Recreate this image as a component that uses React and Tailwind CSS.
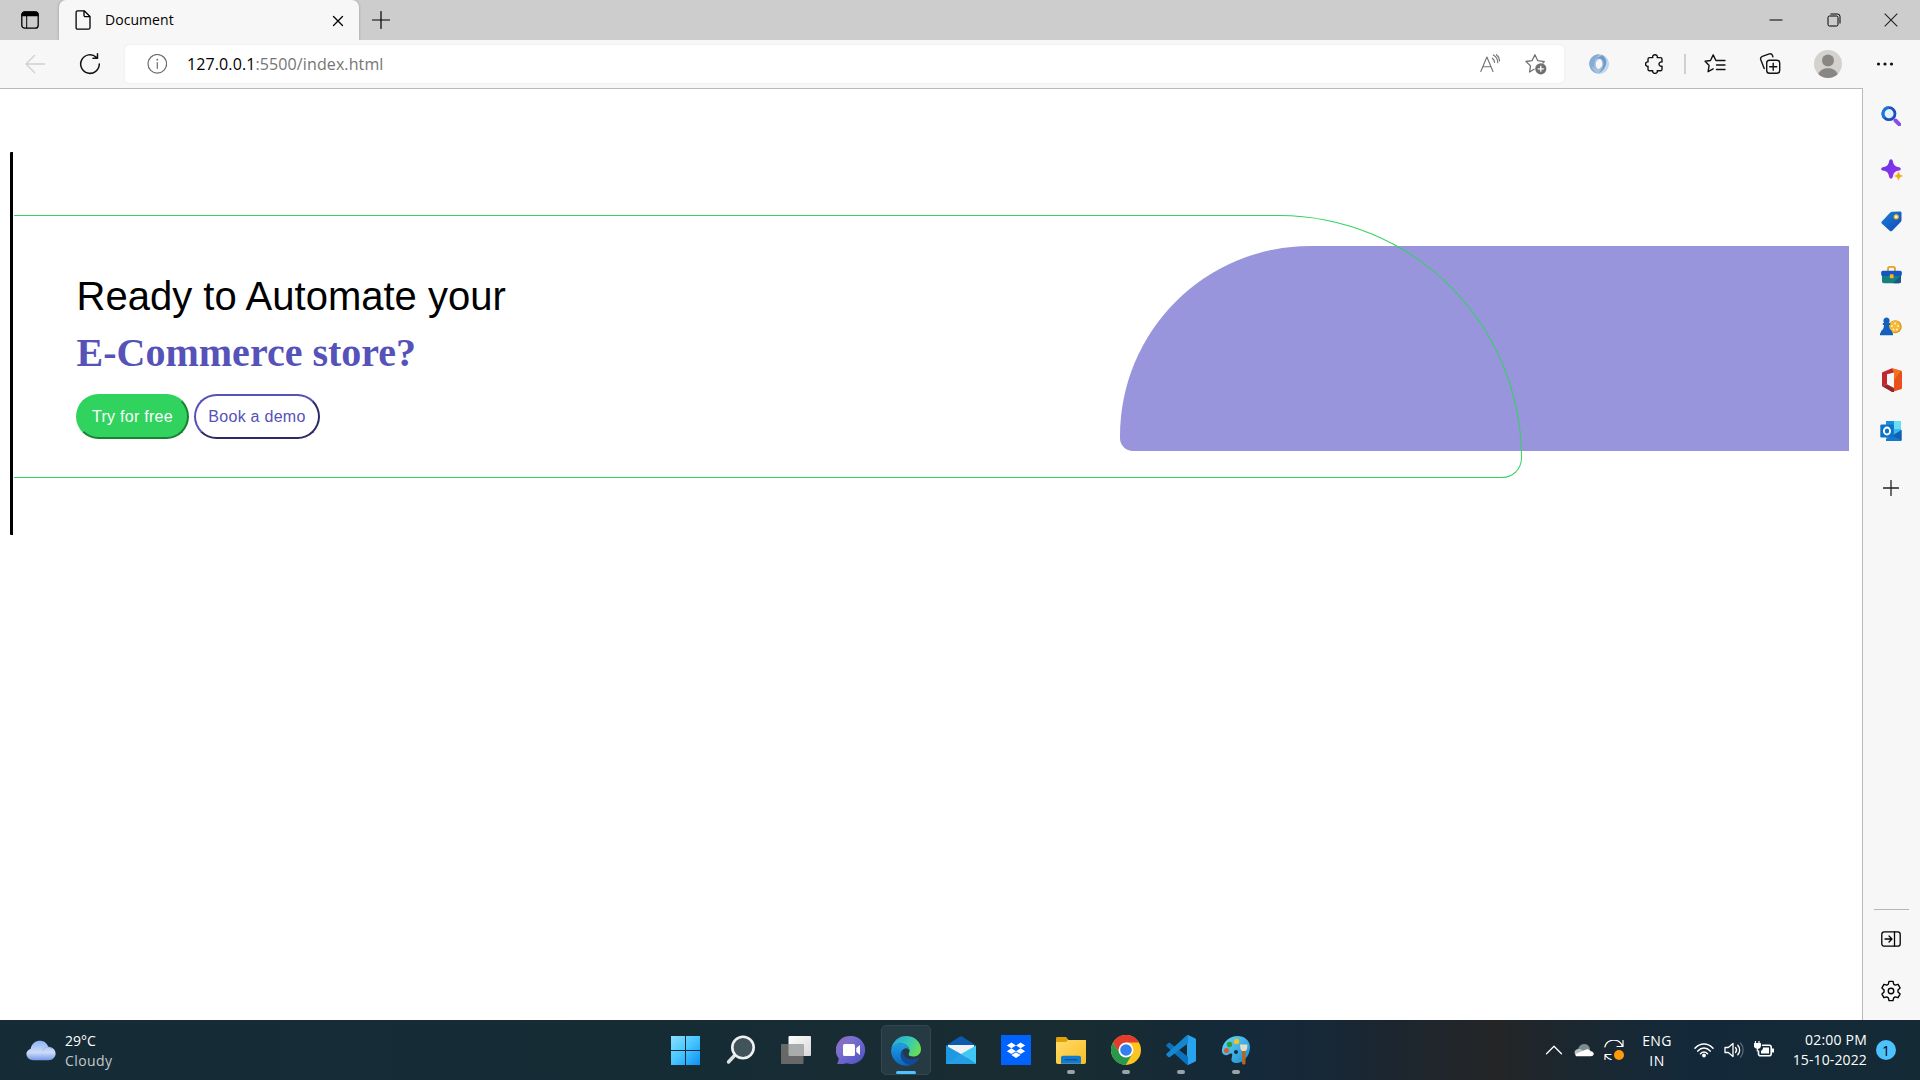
import React from "react";

const UI = "font-['Open_Sans','Noto_Sans',sans-serif]";

function Svg({ size = 20, box, className = "", children, ...rest }) {
  const b = box || size;
  return (
    <svg width={size} height={size} viewBox={`0 0 ${b} ${b}`} fill="none" className={`block shrink-0 ${className}`} {...rest}>
      {children}
    </svg>
  );
}

const line = { stroke: "currentColor", strokeWidth: 1.3, strokeLinecap: "round", strokeLinejoin: "round" };

function TitleBar() {
  return (
    <header className="flex h-10 bg-[#cdcdcd]">
      <div className="flex w-[59px] items-center justify-center rounded-br-[6px] pb-px pl-px text-black">
        <Svg size={20}>
          <rect x="1.8" y="2" width="16.4" height="16.2" rx="3" {...line} />
          <path d="M1.5 6.2V4.5a3 3 0 0 1 3-3h11a3 3 0 0 1 3 3v1.7z" fill="currentColor" />
          <path d="M6.7 6v12" {...line} strokeWidth="1" />
        </Svg>
      </div>
      <div className="flex w-[300px] items-center rounded-t-[7px] bg-[#f7f7f7] pl-[14px] text-black shadow-[0_0_3px_rgba(0,0,0,0.25)]">
        <Svg size={20}>
          <path d="M4.600.8h6.600L17 6.500v11.200c0 .9-.6 1.500-1.500 1.500H4.600c-.9 0-1.500-.6-1.500-1.500V2.300C3.100 1.400 3.700.8 4.600.8M11 1v4.200c0 .9.6 1.500 1.500 1.500H17" {...line} />
        </Svg>
        <span className="ml-3 mt-[-1px] w-[227px] text-[14px] leading-5 tracking-[0.05px]">Document</span>
        <Svg size={12} className="mt-px">
          <path d="M1.500 1.500l9 9M10.500 1.500l-9 9" {...line} />
        </Svg>
      </div>
      <div className="flex w-[44px] items-center justify-center pb-px text-black">
        <Svg size={18}>
          <path d="M9 .5v17M.5 9h17" {...line} strokeWidth="1.200" />
        </Svg>
      </div>
      <div className="ml-auto flex w-[173px] pb-px text-black">
        <div className="flex w-[58px] items-center justify-center">
          <Svg size={14}><path d="M.5 7h13" stroke="currentColor" /></Svg>
        </div>
        <div className="flex w-[57px] items-center justify-center">
          <Svg size={14}>
            <rect x="1" y="3" width="10" height="10" rx="1.500" stroke="currentColor" />
            <path d="M3.500 1h7A2.500 2.500 0 0 1 13 3.500v7" stroke="currentColor" />
          </Svg>
        </div>
        <div className="flex w-[58px] items-center justify-center">
          <Svg size={14}><path d="M.7.7l12.600 12.600M13.300.7L.7 13.300" stroke="#222" strokeWidth="1.100" /></Svg>
        </div>
      </div>
    </header>
  );
}

function ToolBar() {
  return (
    <div className="flex h-12 items-center bg-[#f7f7f7] text-[#111]">
      <div className="flex w-[69px] justify-center text-[#cfcfcf]">
        <Svg size={20} className="-mt-px"><path d="M9.500 1.500L1 10l8.500 8.500M1 10h18.500" {...line} /></Svg>
      </div>
      <div className="flex w-[42px] justify-center">
        <Svg size={22}>
          <path d="M20.300 11a9.300 9.300 0 1 1-3-6.800M18.500.8v4.500h-4.500" {...line} strokeWidth="1.500" />
        </Svg>
      </div>
      <div className="ml-[14px] flex h-[38px] w-[1439px] items-center rounded-[5px] bg-white shadow-[0_0_3px_rgba(0,0,0,0.06)]">
        <Svg size={20} className="ml-[22px] text-[#6b6b6b]">
          <circle cx="10.300" cy="9.800" r="9.300" {...line} strokeWidth="1.200" />
          <path d="M10.300 8.600v5.700" {...line} strokeWidth="1.200" />
          <circle cx="10.300" cy="5.700" r=".9" fill="currentColor" />
        </Svg>
        <span className="ml-[20px] mt-[-1px] text-[16px] leading-5 tracking-[0.11px] text-[#757575]">
          <span className="text-black">127.0.0.1</span>:5500/index.html
        </span>
        <div className="ml-auto flex items-center text-[#707070]">
          <div className="flex w-[46px] justify-center">
            <Svg size={20}>
              <path d="M.8 17.500L6.900 3l6.100 14.500M2.900 12.800h8.100M12.300 4.200c1.400 1 2.200 2.500 2.200 4.300M13.300.9c2.800 1.600 4.500 4.400 4.500 7.800M16.500.7c1.900 1.500 3 3.800 3 6.300" {...line} strokeWidth="1.100" />
            </Svg>
          </div>
          <div className="mr-[5px] flex w-[46px] justify-center">
            <Svg size={22}>
              <path d="M9 16.300L4.600 19l.9-6.100L1 8.500l6-.8L9.900 1.800l2.900 5.900 6.500.9-1.300 1.400" {...line} />
              <circle cx="15.800" cy="15.800" r="5.600" fill="currentColor" />
              <path d="M15.800 12.800v6M12.800 15.800h6" stroke="#fff" strokeWidth="1.300" />
            </Svg>
          </div>
        </div>
      </div>
      <div className="flex w-[70px] justify-center">
        <Svg size={20}>
          <circle cx="10" cy="10" r="6.500" stroke="#a5c1de" strokeWidth="6.500" />
          <path d="M11 5c5-.5 6 8-1.500 14.800 5.500.2 9.900-4 10.300-9.300C19.500 5.500 16 1 11 .3c4 1.500 6 5 5.500 8C15.500 6.500 13.500 5 11 5z" fill="#c3d8ec" />
          <path d="M13 1c4 2.500 5.500 6.500 3.500 11-1.200 3-3.500 5.500-7 7.800 4-5 5.700-9 4.500-12.300C13 5 10.500 4 7.500 5 9.500 2 12.500 3 13 1z" fill="#6f9bc9" />
          <path d="M9 15c-5 .5-6-8 1.500-14.800C5 0 .6 4.200.2 9.500.5 14.500 4 19 9 19.700c-4-1.500-6-5-5.500-8C4.500 13.500 6.500 15 9 15z" fill="#86abd4" />
          <ellipse cx="10" cy="10" rx="3" ry="5" transform="rotate(10 10 10)" fill="#f7f7f7" />
        </Svg>
      </div>
      <div className="flex w-[42px] justify-center">
        <Svg size={20}>
          <path d="M4.600 3.600h3.200c-.5-1.500.4-2.800 2.200-2.800s2.700 1.300 2.200 2.800h3.200c1 0 1.600.6 1.600 1.600V8c-4-.8-4 5 0 4.200v3c0 1-.6 1.600-1.600 1.600h-3.200c.5 1.500-.4 2.600-2.200 2.600s-2.700-1.100-2.200-2.600H4.600c-1 0-1.600-.6-1.600-1.600v-2.900C-.2 12.800-.2 7.300 3 7.900V5.200c0-1 .6-1.600 1.600-1.600z" {...line} strokeWidth="1.400" />
        </Svg>
      </div>
      <div className="ml-[8px] h-5 w-[2px] bg-[#d0d0d0]" />
      <div className="ml-[2px] flex w-[54px] justify-center">
        <Svg size={22}>
          <path d="M12.500 7.500h-.6L9.200 1.900 6.500 7.500l-5.400.8 4 4.200-1 6.200 5-2.900M12.500 7.500h8.500M12.500 12h8.500M12.500 16.500h8.500" {...line} strokeWidth="1.400" />
        </Svg>
      </div>
      <div className="flex w-[56px] justify-center">
        <Svg size={22}>
          <rect x="7.700" y="7.200" width="13" height="13" rx="2.800" {...line} strokeWidth="1.400" />
          <path d="M14.200 10.200v7M10.700 13.700h7M5.200 15.500L1.800 6.700C1.200 5 1.800 3.900 3.300 3.300l7-2.400c1.400-.4 2.500 0 3.100 1.400l.5 1.600" {...line} strokeWidth="1.400" />
        </Svg>
      </div>
      <div className="flex w-[60px] justify-center">
        <Svg size={28}>
          <circle cx="14" cy="14" r="14" fill="#d4d2ce" />
          <circle cx="14" cy="10.500" r="6" fill="#8a8683" />
          <path d="M4.200 24C6 20 9.500 18.200 14 18.200S22 20 23.800 24c-5 5.200-14.600 5.200-19.600 0z" fill="#8a8683" />
        </Svg>
      </div>
      <div className="flex w-[54px] justify-center">
        <Svg size={18}>
          <g fill="currentColor"><circle cx="2.500" cy="9" r="1.600" /><circle cx="9" cy="9" r="1.600" /><circle cx="15.500" cy="9" r="1.600" /></g>
        </Svg>
      </div>
    </div>
  );
}

function Page() {
  return (
    <main className="flex h-full w-[1863px] items-start border-r border-t border-[#b9b9b9] bg-white pl-[10px]">
      <div className="mt-[63px] h-[383px] w-[3px] shrink-0 rounded-l-[1px] bg-black" />
      <div className="relative ml-px mt-[126px] h-[263px] w-[1508px] shrink-0">
        <div className="absolute left-[1106px] top-[31px] h-[205px] w-[729px] rounded-bl-[13px] rounded-tl-[190px] bg-[#9895dc]" />
        <div className="relative h-full rounded-br-[20px] rounded-tr-[243px] border border-l-0 border-[#2fd35d] pl-[62px] pt-[52px]">
          <h1 className="h-[57px] whitespace-nowrap pl-[0.6px] pt-[5px] font-['Liberation_Sans',Arial,sans-serif] text-[40px] leading-[46px] text-black">Ready to Automate your</h1>
          <h2 className="h-[69px] whitespace-nowrap pl-[0.6px] pt-[5px] font-['Liberation_Serif','Times_New_Roman',serif] text-[40px] font-bold leading-[46px] text-[#5552b9]">E-Commerce store?</h2>
          <div className="flex gap-[5px] font-['Liberation_Sans',Arial,sans-serif] text-[16px]">
            <button className="h-[45px] w-[113px] whitespace-nowrap rounded-[25px] border-2 border-[#2fd35d] border-b-[#1b7f38] border-r-[#1b7f38] bg-[#2fd35d] tracking-[0.27px] text-white">Try for free</button>
            <button className="h-[45px] w-[126px] whitespace-nowrap rounded-[25px] border-2 border-[#5552b9] border-b-[#2c2a63] border-r-[#2c2a63] bg-white tracking-[0.27px] text-[#5552b9]">Book a demo</button>
          </div>
        </div>
      </div>
    </main>
  );
}

function SideCell({ className, children }) {
  return <div className={`flex w-full items-center justify-center ${className}`}>{children}</div>;
}

function SideBar() {
  return (
    <aside className="flex h-full w-[57px] flex-col bg-[#f7f7f7] pr-px text-[#222]">
      <SideCell className="h-[56px]">
        <Svg size={20}>
          <path d="M14.500 14.500l3.800 3.800" stroke="#8a4be8" strokeWidth="4" strokeLinecap="round" />
          <circle cx="8" cy="7.700" r="6" stroke="#1a4fc4" strokeWidth="2.800" fill="#e2f1fb" />
          <path d="M3.500 11.800A6 6 0 0 1 8 1.700" stroke="#1679d8" strokeWidth="2.800" />
        </Svg>
      </SideCell>
      <SideCell className="h-[52px] pl-[2px]">
        <Svg size={22}>
          <defs><linearGradient id="spark" x1="0" y1="0" x2="1" y2="1"><stop stopColor="#5b3be0" /><stop offset="1" stopColor="#a42cf0" /></linearGradient></defs>
          <path d="M10 .3c1.100 0 1.500.8 1.900 2.200.9 3.500 1.700 4.700 5.200 5.500 1.700.4 2.700.9 2.700 1.900s-1 1.500-2.700 1.900c-3.500.8-4.300 2.200-5.200 5.700-.4 1.400-.8 2.200-1.900 2.200s-1.500-.8-1.900-2.200c-.9-3.500-1.700-4.900-5.200-5.700C1.200 11.400.2 10.900.2 9.900S1.200 8.400 2.900 8c3.500-.8 4.300-2 5.200-5.500C8.500 1.100 8.900.3 10 .3z" fill="url(#spark)" />
          <path d="M17.500 12l1.600 3.400 3.200 1.600-3.200 1.600-1.600 3.400-1.600-3.400L12.500 17l3.400-1.600z" fill="#f2ae18" stroke="#f7f7f7" strokeWidth=".4" />
        </Svg>
      </SideCell>
      <SideCell className="h-[52px] pb-px">
        <Svg size={21}>
          <defs><linearGradient id="tag" x1="0" y1="0" x2="1" y2="1"><stop stopColor="#1b83d8" /><stop offset="1" stopColor="#1246b8" /></linearGradient></defs>
          <path d="M11 .8L19 .5c1 0 1.500.5 1.500 1.500v7c0 .8-.2 1.300-.8 2l-8.500 8.700c-.8.8-1.600.8-2.500 0L1 12.700c-.8-.8-.8-1.700 0-2.500L9.300 1.600c.5-.6 1-.8 1.700-.8z" fill="url(#tag)" />
          <circle cx="15.200" cy="5.800" r="2" fill="#fff4c8" stroke="#f3b91d" strokeWidth="1.200" />
        </Svg>
      </SideCell>
      <SideCell className="h-[54px]">
        <Svg size={21}>
          <path d="M7 6V4.200C7 2.600 7.700 1.900 9 1.900h3c1.300 0 2 .7 2 2.300V6" stroke="#e9a21b" strokeWidth="1.900" />
          <path d="M1 9h19v7c0 1.600-.6 2.200-2.200 2.200H3.200C1.600 18.200 1 17.600 1 16z" fill="#16807f" />
          <path d="M12 18.200L20 10v6c0 1.600-.6 2.200-2.200 2.200z" fill="#17578c" />
          <rect x=".2" y="5.700" width="20.600" height="5.300" rx="1.500" fill="#1556c5" />
          <rect x="8.800" y="9.300" width="3.800" height="4" rx=".7" fill="#f8b51e" />
        </Svg>
      </SideCell>
      <SideCell className="h-[50px]">
        <Svg size={22}>
          <circle cx="15.200" cy="10.700" r="6.500" fill="#dc9218" /><circle cx="14.800" cy="10.500" r="5.700" fill="#f6ba34" />
          <g fill="#fff2c6"><circle cx="15" cy="7.500" r="1" /><circle cx="12" cy="10" r="1" /><circle cx="18" cy="10" r="1" /><circle cx="13.500" cy="13.500" r="1" /><circle cx="16.800" cy="13.500" r="1" /></g>
          <path d="M6.500 1.500a3.200 3.200 0 0 1 2.300 5.400h1.400v2H9c.1 3 1 4.600 3 6.200v1.200l1 1v2H0v-2l1-1v-1.200c2-1.600 2.900-3.200 3-6.200H2.800v-2h1.400a3.200 3.200 0 0 1 2.300-5.400z" fill="#1460bd" />
        </Svg>
      </SideCell>
      <SideCell className="h-[54px] pl-[2px] pt-px">
        <Svg size={24}>
          <path d="M12 .2l9 2.600c.7.2 1 .6 1 1.300v15.800c0 .7-.3 1.100-1 1.300L12 24l-1-.5 3-2.500V4.500z" fill="#e8501c" />
          <path d="M12 .2l9 2.600L14 12V4.500z" fill="#f2751c" />
          <path d="M12 .2L14 4.500 7 6.300v10l-4.400 2.100c-.4.2-.6 0-.6-.4V5.500c0-.8.3-1.200 1-1.500z" fill="#c1272d" />
          <path d="M2.500 18.500L7 16.300 14 20v4h-2z" fill="#98242c" />
        </Svg>
      </SideCell>
      <SideCell className="h-[50px]">
        <Svg size={22}>
          <rect x="6" y="1" width="15" height="18" rx="1" fill="#3bb9ec" />
          <path d="M14 1h6c.6 0 1 .4 1 1v7h-7z" fill="#6bdcf6" />
          <path d="M6 1h8v8H6z" fill="#168fdc" />
          <path d="M6 21h14.500c.8 0 1-.4 1-1V10L6 19z" fill="#1478cf" />
          <path d="M13 16l8.500-6v10.500z" fill="#1061b2" />
          <rect x=".3" y="4.500" width="13.500" height="13" rx="1.200" fill="#0f72c9" />
          <ellipse cx="7" cy="11" rx="3.100" ry="3.500" stroke="#fff" strokeWidth="1.900" />
        </Svg>
      </SideCell>
      <SideCell className="h-[64px]"><Svg size={16}><path d="M8 .5v15M.5 8h15" {...line} strokeWidth="1.300" /></Svg></SideCell>
      <div className="mx-auto mb-[11px] mt-auto h-px w-[35px] bg-[#b5b5b5]" />
      <SideCell className="h-[36px] text-black">
        <Svg size={20}>
          <rect x=".8" y="2.800" width="18.400" height="14.400" rx="2.500" {...line} /><path d="M13.500 3v14M4 10h6.500M8 7l3 3-3 3" {...line} />
        </Svg>
      </SideCell>
      <SideCell className="mb-[11px] mt-[16px] h-[36px] text-black">
        <Svg size={24} className="-my-1">
          <g transform="translate(1 1) scale(.917)">
            <path d="M9.800 1.500h4.400l.7 3.100 1.700 1 3.100-.9 2.200 3.900-2.300 2.200v2.400l2.300 2.200-2.200 3.900-3.100-.9-1.700 1-.7 3.100H9.800l-.7-3.100-1.700-1-3.100.9-2.200-3.900 2.300-2.200v-2.400L2.100 8.600l2.200-3.900 3.100.9 1.700-1z" {...line} strokeWidth="1.500" />
            <circle cx="12" cy="12" r="3" {...line} strokeWidth="1.500" />
          </g>
        </Svg>
      </SideCell>
    </aside>
  );
}

function TaskItem({ open, active, children }) {
  return (
    <div className="flex w-[55px] justify-center">
      <div className={`flex h-[50px] w-[50px] flex-col items-center rounded-[5px] pt-[10px] ${active ? "border border-[#34464f] bg-[#263a43] pt-[9px]" : ""}`}>
        <div className="h-[30px]">{children}</div>
        {active && <div className="mt-[5px] h-1 w-5 rounded-full bg-[#4cc2ff]" />}
        {open && <div className="mt-[5px] h-1 w-2 rounded-full bg-[#9aa3a7]" />}
      </div>
    </div>
  );
}

function TaskBar() {
  return (
    <footer className="flex h-[60px] bg-[linear-gradient(90deg,#152b36_0%,#162c35_35%,#182c31_55%,#14293a_66%,#1b2631_72%,#242526_78%,#1b2730_82%,#13293a_88%,#142a35_100%)] text-white">
      <div className="flex w-[658px] items-center pl-[25px]">
        <Svg size={31} box={30}>
          <defs><linearGradient id="cloud" x1="0" y1="0" x2="0" y2="1"><stop stopColor="#8fb3f3" /><stop offset=".6" stopColor="#cbdcf8" /><stop offset="1" stopColor="#7399e6" /></linearGradient></defs>
          <path d="M8 24.500a7.500 6 0 0 1-2.500-11.300C7.500 3.500 20 3 22.500 11.500c9.500 0 9.500 13 0 13z" fill="url(#cloud)" />
          <path d="M17 15c2-4 7-4.500 9-1.500" stroke="#8fb0ed" opacity=".7" />
        </Svg>
        <div className="ml-[9px] mt-px text-[14px] leading-5">
          <div>29°C</div>
          <div className="tracking-[0.4px] text-[#c3c9cc]">Cloudy</div>
        </div>
      </div>
      <nav className="flex items-center">
        <TaskItem>
          <Svg size={30}>
            <defs><linearGradient id="win" x1="0" y1="0" x2="1" y2="1"><stop stopColor="#8ae0ff" /><stop offset=".5" stopColor="#45c5ff" /><stop offset="1" stopColor="#0c91f4" /></linearGradient></defs>
            <path d="M0 1h14v14H0zM15 1h14v14H15zM0 16h14v14H0zM15 16h14v14H15z" fill="url(#win)" />
          </Svg>
        </TaskItem>
        <TaskItem>
          <Svg size={30}>
            <path d="M9 20l-6.500 7" stroke="#dfe2e4" strokeWidth="3.400" strokeLinecap="round" />
            <circle cx="17" cy="12.500" r="10.700" fill="#42535b" stroke="#f0f1f2" strokeWidth="2.600" />
          </Svg>
        </TaskItem>
        <TaskItem>
          <Svg size={30}>
            <defs><linearGradient id="tv" x1="0" y1="0" x2="1" y2="1"><stop stopColor="#fff" /><stop offset="1" stopColor="#d8d8d8" /></linearGradient></defs>
            <rect x="7.500" y="1" width="22.500" height="20" rx="1" fill="url(#tv)" />
            <rect x="0" y="9" width="22.500" height="20" rx="1" fill="#686868" />
            <path d="M7.500 9h15v12h-14a1 1 0 0 1-1-1z" fill="#a9abac" />
          </Svg>
        </TaskItem>
        <TaskItem>
          <Svg size={30}>
            <defs><linearGradient id="chat" x1="0" y1="0" x2="1" y2="1"><stop stopColor="#9a63a8" /><stop offset=".3" stopColor="#7f70cf" /><stop offset="1" stopColor="#4a50c4" /></linearGradient></defs>
            <path d="M15 1a14 14 0 1 1-4.500 27.200c-3 .8-6.500 1.200-9.500.6 1-1.600 1.500-3 1.800-5.300A14 14 0 0 1 15 1z" fill="url(#chat)" />
            <rect x="7" y="9" width="12" height="12" rx="1.500" fill="#fff" /><path d="M20.300 13l3.700-3v10l-3.700-3z" fill="#fff" />
          </Svg>
        </TaskItem>
        <TaskItem active>
          <Svg size={30}>
            <defs>
              <linearGradient id="edgeTop" x1="0" y1=".3" x2="1" y2=".7"><stop stopColor="#2aa7dc" /><stop offset=".5" stopColor="#36c9b8" /><stop offset="1" stopColor="#6be04a" /></linearGradient>
              <linearGradient id="edgeLeft" x1="0" y1="0" x2="0" y2="1"><stop stopColor="#219fe3" /><stop offset="1" stopColor="#0867be" /></linearGradient>
            </defs>
            <path d="M.3 12.500C2 4.800 8 0 15 0c9 0 15 6.300 15 13.200 0 4.500-3.500 7.300-7.600 7.300-3 0-4.800-1-4.800-2.300 0-.8 1-1.600 1-3.200C18.600 11 15 7.500 10 7.500c-4.500 0-8 2-9.700 5z" fill="url(#edgeTop)" />
            <path d="M.1 15C0 10 4.500 7.500 10 7.500c5 0 8.600 3.500 8.600 7.500l-.3-.7c-.8-2-3.800-2.800-6-.8C9 16 9 21 12 25c2 2.600 5.500 4.300 9 3.700C11.500 32.500.5 26 .1 15z" fill="url(#edgeLeft)" />
            <path d="M12.300 13.500C9 16 8.800 21 11.800 25c2.100 2.800 5.700 4.300 9.200 3.700 3.500-1.500 5.300-3.500 6.700-5.800.4-.7-.2-1.100-.8-.8-5.700 2.700-13.200.8-14.600-4.200-.4-1.700-.4-3.200 0-4.400z" fill="#114a9b" />
          </Svg>
        </TaskItem>
        <TaskItem>
          <Svg size={30}>
            <path d="M0 10.500L13.500 1.700c1-.7 2-.7 3 0L30 10.500V20H0z" fill="#0c5aac" />
            <path d="M2 10h26v8l-13 8-13-8z" fill="#f0f1f3" />
            <path d="M0 10.500L15 19 30 29H0z" fill="#1f98e2" />
            <path d="M30 10.500V29L15 19z" fill="#40c8f4" />
            <path d="M15 19L30 29H0z" fill="#249fe5" />
          </Svg>
        </TaskItem>
        <TaskItem>
          <Svg size={30}>
            <rect width="30" height="30" fill="#0062ff" />
            <path d="M10.400 7.500l-4.600 2.900 4.600 2.900 4.600-2.900zM19.600 7.500L15 10.400l4.600 2.900 4.600-2.900zM10.400 13.300l-4.600 2.900 4.600 2.900 4.600-2.900zM19.600 13.300L15 16.200l4.600 2.900 4.600-2.900zM15 17.200l-4.600 2.900L15 23l4.600-2.900z" fill="#fff" />
          </Svg>
        </TaskItem>
        <TaskItem open>
          <Svg size={30}>
            <defs><linearGradient id="folder" x1="0" y1="0" x2="1" y2="1"><stop stopColor="#ffdc68" /><stop offset="1" stopColor="#f9bd25" /></linearGradient></defs>
            <path d="M0 3.500C0 2.500.5 2 1.500 2H9c1 0 1.500.3 2 1l2 2.500V10H0z" fill="#e0a008" />
            <path d="M0 7h10l2-2h18v22c0 1.200-.6 2-2 2H2c-1.400 0-2-.8-2-2z" fill="url(#folder)" />
            <path d="M5 28.800V23c0-1.500.8-2.300 2.300-2.300h15.400c1.500 0 2.300.8 2.300 2.300v5.800z" fill="#117bd0" />
            <path d="M8.500 24.700h13" stroke="#0b559c" strokeWidth="1.300" />
          </Svg>
        </TaskItem>
        <TaskItem open>
          <Svg size={30}>
            <circle cx="15" cy="15" r="15" fill="#fcc51f" />
            <path d="M2 7.500A15 15 0 0 1 28 7.500H15L9 18.500z" fill="#e33b2e" />
            <path d="M2 7.500A15 15 0 0 0 14.700 30L21.500 18.500H9z" fill="#29984c" />
            <circle cx="15" cy="15" r="7.500" fill="#fff" /><circle cx="15" cy="15" r="5.800" fill="#327eef" />
          </Svg>
        </TaskItem>
        <TaskItem open>
          <Svg size={30}>
            <path d="M22 0l7 3.200c.7.3 1 .8 1 1.500v20.600c0 .7-.3 1.200-1 1.500L22 30l-1-7V7z" fill="#28a3ee" />
            <path d="M22 30c-.7.1-1.200-.2-1.700-.7L.7 11.400c-.6-.6-.6-1.200 0-1.800L2.300 8c.5-.4 1.100-.4 1.700 0L22 21.800z" fill="#0b72bd" />
            <path d="M22 0c-.7-.1-1.200.2-1.700.7L.7 18.600c-.6.6-.6 1.200 0 1.800L2.300 22c.5.4 1.100.4 1.700 0L22 8.200z" fill="#1686cf" />
          </Svg>
        </TaskItem>
        <TaskItem open>
          <Svg size={30}>
            <defs><linearGradient id="paint" x1="0" y1="0" x2="1" y2="1"><stop stopColor="#66d9f5" /><stop offset="1" stopColor="#1b8bd5" /></linearGradient></defs>
            <path d="M1 14.500C2 6.500 9 1 16.500 1 23.500 1 29 5.500 29 12.500c0 8-6.500 15.500-13.500 15.500-3.500 0-5.500-1.500-5-4.200.4-2.500 1.500-4.300 0-5.200-2-1-3.500 2.400-6.500 1.400C1.500 19.200.6 17 1 14.500z" fill="url(#paint)" />
            <circle cx="15.500" cy="6.500" r="2.700" fill="#f5c21f" /><circle cx="8.500" cy="9.500" r="2.700" fill="#26a03a" /><circle cx="5.500" cy="15.500" r="2.500" fill="#e2572b" /><circle cx="15" cy="17" r="2" fill="#15313c" />
            <path d="M21 14h3.500v14c0 2-3.500 2-3.500 0z" fill="#b5651d" /><path d="M19 9.500h7.500l-.5 4.500-1.500 2H21l-1.500-2z" fill="#e7dcc9" />
          </Svg>
        </TaskItem>
      </nav>
      <div className="ml-auto flex items-center">
        <div className="flex w-[30px] justify-center"><Svg size={18}><path d="M1.500 12.800L9 5.300l7.500 7.500" {...line} /></Svg></div>
        <div className="flex w-[30px] justify-center">
          <Svg size={20}>
            <path d="M4 13C3 8 6 4 10 4c3.500 0 5.500 2 6 5l-6 6z" fill="#7d8b92" />
            <path d="M2.500 15.500C-.5 14 0 9.500 4 9c3-.5 5 1 6 3z" fill="#b6bfc3" />
            <path d="M3 16.300c-2-.3-2-2-.5-2.800L11 10c1.500-1.500 5-1 5.700 1.300 4 .5 4.200 5 0 5z" fill="#fff" />
          </Svg>
        </div>
        <div className="flex w-[30px] justify-center">
          <Svg size={20}>
            <path d="M.8 7A9.300 9.300 0 0 1 18.500 6.300M19 .5v6h-6M7 14.500H1v5M1.200 14.500c1 2.500 3 4.300 6 5" {...line} strokeWidth="1.200" />
            <circle cx="15" cy="15" r="5" fill="#ff9a0b" />
          </Svg>
        </div>
        <div className="mt-px w-[56px] text-center text-[14px] leading-5 tracking-[0.4px]"><div>ENG</div><div>IN</div></div>
        <div className="ml-[4px] flex w-[30px] justify-center">
          <Svg size={20}>
            <path d="M1 8.300C6 2.600 14 2.600 19 8.300M3.800 11.100c3.600-4 8.800-4 12.400 0M6.500 13.700c2-2.200 5-2.200 7 0" {...line} strokeWidth="1.500" /><circle cx="10" cy="15.500" r="1.900" fill="#fff" />
          </Svg>
        </div>
        <div className="flex w-[30px] justify-center">
          <Svg size={20}>
            <path d="M1 7.500h3.300L9 3.500v13l-4.700-4H1z" {...line} /><path d="M11.500 7.500c1.300 1.500 1.300 3.500 0 5M13.800 5.300c2.500 2.700 2.500 6.700 0 9.400" {...line} /><path d="M16.500 3c3.500 4 3.500 10 0 14" {...line} opacity=".3" />
          </Svg>
        </div>
        <div className="flex w-[30px] justify-center">
          <Svg size={20}>
            <path d="M8.500 5.200h6.700c1.300 0 2 .7 2 2v6.600c0 1.300-.7 2-2 2H6.500c-1.300 0-2-.7-2-2V11" {...line} strokeWidth="1.600" /><path d="M9 7.500h6v6H7V11c1.300-.8 2-1.800 2-3.500z" fill="#fff" /><path d="M18 8.500h2v4h-2z" fill="#fff" />
            <path d="M1.500 1v3M5 1v3M.5 3.500h5.800v2.200c0 3.300-5.800 3.300-5.800 0zM3.300 8v3.500" stroke="#fff" strokeWidth="1.200" fill="#fff" />
          </Svg>
        </div>
        <div className="ml-[4px] w-[84px] whitespace-nowrap text-right text-[14px] leading-5"><div className="tracking-[0.2px]">02:00 PM</div><div className="tracking-[0.12px]">15-10-2022</div></div>
        <div className="ml-[9px] mr-[24px] flex h-5 w-5 items-center justify-center rounded-full bg-[#4cc2ff] text-[14px] text-black">1</div>
      </div>
    </footer>
  );
}

export default function App() {
  return (
    <div className={`flex h-[1080px] w-[1920px] flex-col overflow-hidden bg-[#f7f7f7] ${UI}`}>
      <TitleBar />
      <ToolBar />
      <div className="flex h-[932px]">
        <Page />
        <SideBar />
      </div>
      <TaskBar />
    </div>
  );
}
